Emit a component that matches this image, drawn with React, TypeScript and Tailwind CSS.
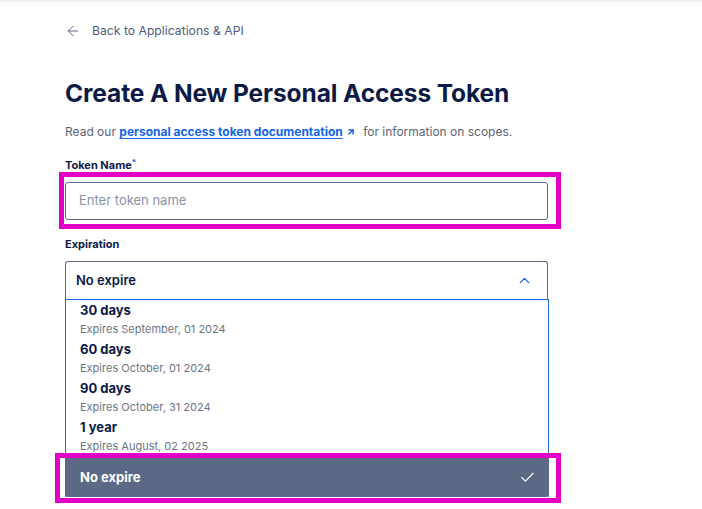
import { ArrowLeft, ArrowUpRight, ChevronUp, Check } from 'lucide-react'

const options = [
  { label: '30 days', note: 'Expires September, 01 2024' },
  { label: '60 days', note: 'Expires October, 01 2024' },
  { label: '90 days', note: 'Expires October, 31 2024' },
  { label: '1 year', note: 'Expires August, 02 2025' },
]

export default function App() {
  return (
    <div className="min-h-[509px] w-[702px] bg-white font-['Inter',sans-serif] text-[#0c1a45]">
      {/* header edge shadow */}
      <div className="h-[2px] bg-[#f1f1f3] shadow-[0_2px_4px_rgba(0,0,0,0.05)]" />

      <div className="w-[483px] ml-[65px]">
        <a className="mt-[20px] flex items-center gap-[11px] text-[12.2px] leading-[18px] text-[#4d5b7c]">
          <ArrowLeft size={16} strokeWidth={1.4} className="text-[#4d5b7c]" />
          <span>Back to Applications &amp; API</span>
        </a>

        <h1 className="mt-[37px] text-[24.5px] leading-[32px] font-bold tracking-[-0.1px] text-[#0c1a45]">
          Create A New Personal Access Token
        </h1>

        <p className="mt-[14px] text-[12px] leading-[18px] text-[#5b6476] whitespace-nowrap">
          Read our{' '}
          <span className="font-bold text-[#1163e8] underline underline-offset-2">personal access token documentation</span>
          <ArrowUpRight size={10} strokeWidth={3.5} className="inline ml-[3px] mr-[4px] text-[#1163e8] align-[-1px]" />{' '}
          for information on scopes.
        </p>

        <label className="mt-[16px] block text-[11px] leading-[16px] font-bold">
          Token Name<sup className="text-[#1163e8] text-[8px]">*</sup>
        </label>

        <div className="relative mt-[9px]">
          <div className="h-[38px] rounded-[3px] border border-[#5b6985] px-[13px] flex items-center text-[13px] text-[#8a93a8]">
            Enter token name
          </div>
          <div className="absolute -left-[6px] -top-[10px] -right-[13px] -bottom-[9px] border-[5px] border-[#e300c6] pointer-events-none" />
        </div>

        <label className="mt-[16px] block text-[11px] leading-[16px] font-bold">Expiration</label>

        <div className="mt-[9px] h-[38px] rounded-t-[3px] border border-b-0 border-[#5b6985] pl-[10px] pr-[14px] flex items-center justify-between">
          <span className="text-[13px] font-semibold">No expire</span>
          <ChevronUp size={17} strokeWidth={1.8} className="text-[#1163e8]" />
        </div>

        <div className="w-[484px] border border-b-0 border-[#1a6be6]">
          {options.map((o) => (
            <div key={o.label} className="pl-[14px] pt-[1px] pb-[1px]">
              <div className="text-[13px] leading-[18px] font-bold">{o.label}</div>
              <div className="mt-[1px] text-[11px] leading-[18px] text-[#6b7385]">{o.note}</div>
            </div>
          ))}
          <div className="relative -mx-px mt-[2px]">
            <div className="h-[39px] rounded-b-[3px] bg-[#5b6985] pl-[15px] pr-[13px] flex items-center justify-between text-white">
              <span className="text-[13px] font-bold">No expire</span>
              <Check size={17} strokeWidth={1.6} />
            </div>
            <div className="absolute -left-[10px] -top-[5px] -right-[12px] -bottom-[6px] border-[5px] border-[#e300c6] pointer-events-none" />
          </div>
        </div>
      </div>
    </div>
  )
}
